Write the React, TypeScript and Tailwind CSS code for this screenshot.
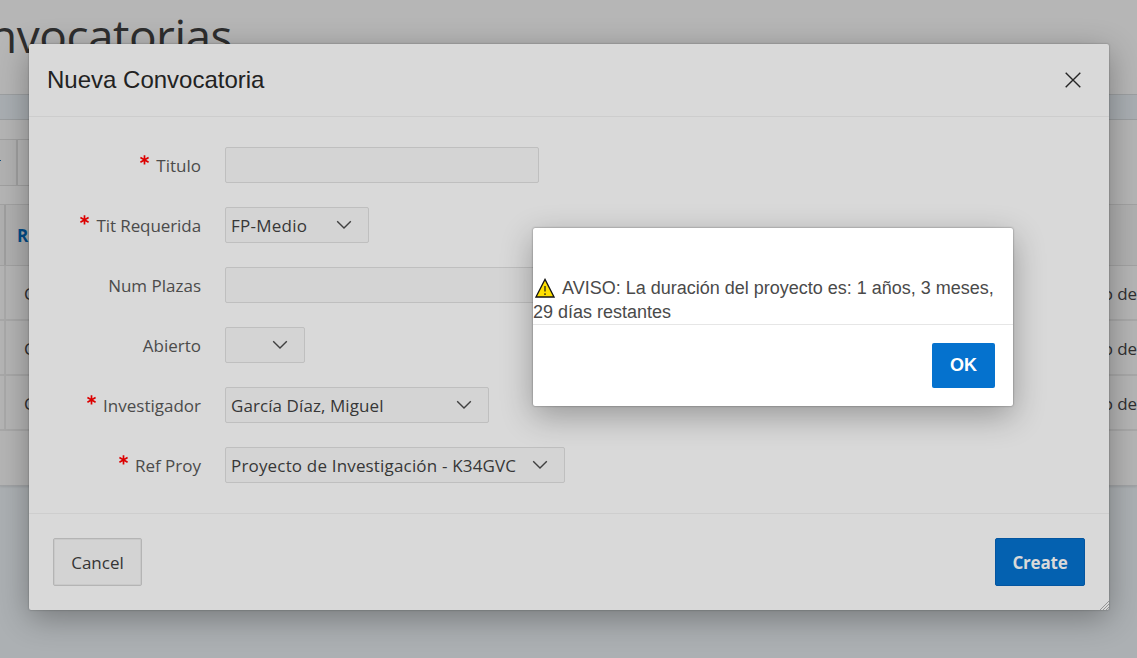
import React from "react";

const ui = "font-['Open_Sans','Noto_Sans',sans-serif]";
const arial = "font-['Liberation_Sans',Arial,sans-serif]";

function Chevron() {
  return (
    <svg className="block h-4 w-4 shrink-0" viewBox="0 0 16 16" fill="none" stroke="#404040" strokeWidth="1.4">
      <path d="M1.2 4.2 8 11l6.8-6.8" />
    </svg>
  );
}

function Asterisk() {
  return (
    <svg className="mr-[7px] mb-[10px] h-[10px] w-[9px] shrink-0" viewBox="0 0 9 10" fill="none" stroke="#dc0000" strokeWidth="1.7">
      <path d="M4.5 .3v9.2M.4 2.5l8.2 4.7M8.6 2.5.4 7.2" />
    </svg>
  );
}

type FieldProps = {
  label: string;
  required?: boolean;
  labelClass?: string;
  boxClass: string;
  children?: React.ReactNode;
};

function Field({ label, required, labelClass = "", boxClass, children }: FieldProps) {
  return (
    <div className="flex h-[60px] items-center">
      <div className="flex w-[172px] shrink-0 items-center justify-end">
        {required && <Asterisk />}
        <span className={`whitespace-nowrap pt-[2px] text-[17px] leading-6 text-[#4b4b4b] ${labelClass}`}>{label}</span>
      </div>
      <div
        className={`ml-6 flex h-9 shrink-0 items-center justify-between rounded-[2px] border border-[#bfbfbf] bg-[#d4d4d4] pl-[5px] text-[17px] text-[#373737] ${boxClass}`}
      >
        {children}
      </div>
    </div>
  );
}

function TableRow() {
  return (
    <div className="flex h-[55px] border-b-2 border-[#a8a8a8] text-[17px] text-[#303030]">
      <div className="w-[6px] shrink-0 border-r-2 border-[#a9a9a9]" />
      <div className="flex flex-1 items-center justify-between pl-[18px] pt-[2px]">
        <span>C</span>
        <span className="tracking-[-0.1px]">o de</span>
      </div>
    </div>
  );
}

function Backdrop() {
  return (
    <div className="flex h-full flex-col bg-[#acb0b3]">
      <div className="flex h-[95px] shrink-0 border-b border-[#9c9fa1] bg-[#b6b6b6]">
        <div className="flex w-[232px] justify-end whitespace-nowrap pt-1 text-[46px] leading-[62px] tracking-[-0.5px] text-[#2e2e2e]">
          Convocatorias
        </div>
      </div>
      <div className="h-[25px] shrink-0 border-b border-[#9b9ea0] bg-[#a9aeb2]" />
      <div className="flex h-[366px] shrink-0 flex-col border-b border-[#a0a2a4] bg-[#b5b5b5] pt-[19px] shadow-[0_1px_2px_rgba(0,0,0,0.1)]">
        <div className="flex h-[47px] w-[600px] shrink-0 border-y border-[#a0a0a0]">
          <div className="flex w-[18px] items-center border-r-2 border-[#9f9f9f] bg-[#b2b2b2]">
            <span className="mb-1 h-px w-px bg-[#14517f]" />
          </div>
        </div>
        <div className="mt-[18px] flex h-[62px] shrink-0 border-y border-[#a2a2a2] bg-[#b0b0b0]">
          <div className="w-[6px] border-r-2 border-[#9f9f9f]" />
          <div className="flex items-center pl-[11px] pt-[2px] text-[17px] font-bold text-[#024c88]">R</div>
        </div>
        <TableRow />
        <TableRow />
        <TableRow />
      </div>
    </div>
  );
}

function NewCallDialog() {
  return (
    <div className="absolute left-[29px] top-[44px] flex h-[566px] w-[1080px] flex-col rounded-[2px] bg-[#d9d9d9] shadow-[0_8px_32px_rgba(0,0,0,0.32),0_0_2px_rgba(0,0,0,0.35)]">
      <div className="flex h-[73px] shrink-0 items-center justify-between border-b border-[#cdcdcd] pl-[18px] pr-7">
        <h2 className={`${arial} text-[24px] leading-8 text-[#222]`}>Nueva Convocatoria</h2>
        <svg className="mb-px h-4 w-4" viewBox="0 0 16 16" fill="none" stroke="#262626" strokeWidth="1.4">
          <path d="m.7.7 14.6 14.6M15.3.7.7 15.3" />
        </svg>
      </div>
      <div className="flex flex-1 flex-col pt-[18px]">
        <Field label="Titulo" required boxClass="w-[314px]" />
        <Field label="Tit Requerida" required labelClass="tracking-[-0.08px]" boxClass="w-[144px] pr-4">
          <span className="pt-[2px] tracking-[0.25px]">FP-Medio</span>
          <Chevron />
        </Field>
        <Field label="Num Plazas" boxClass="w-[314px]" />
        <Field label="Abierto" boxClass="w-[80px] pr-4">
          <span />
          <Chevron />
        </Field>
        <Field label="Investigador" required boxClass="w-[264px] pr-4">
          <span className="pt-[2px] tracking-[0.08px]">García Díaz, Miguel</span>
          <Chevron />
        </Field>
        <Field label="Ref Proy" required boxClass="w-[340px] pr-4">
          <span className="whitespace-nowrap pt-[2px] tracking-[0.17px]">Proyecto de Investigación - K34GVC</span>
          <Chevron />
        </Field>
      </div>
      <div className="flex h-[97px] shrink-0 items-center justify-between border-t border-[#cecece] px-6">
        <button className="h-12 w-[89px] rounded-[2px] border border-[#b4b4b4] bg-[#d3d3d3] pt-[2px] text-[17px] text-[#353535] shadow-[inset_0_0_0_1px_#c9c9c9]">
          Cancel
        </button>
        <button className="h-12 w-[90px] rounded-[2px] border border-[#0455a0] bg-[#0461b0] pt-[2px] text-[17px] font-bold tracking-[-0.2px] text-[#d9d9d9]">
          Create
        </button>
      </div>
      <svg className="absolute bottom-0 right-0 h-[9px] w-[9px]" viewBox="0 0 9 9" stroke="#8d8d8d" strokeWidth=".9">
        <path d="M0 9 9 0M3 9l6-6M6 9l3-3" />
      </svg>
    </div>
  );
}

function AlertDialog() {
  return (
    <div className="absolute left-[533px] top-[228px] flex h-[178px] w-[480px] flex-col rounded-[2px] bg-white shadow-[0_10px_32px_rgba(0,0,0,0.3),0_0_2px_rgba(0,0,0,0.5)]">
      <div className={`${arial} h-[97px] shrink-0 border-b border-[#e6e6e6] pt-12 text-[18px] leading-6 text-[#4a4a4a]`}>
        <div className="flex whitespace-nowrap">
          <svg className="ml-[2px] mr-[7px] mt-[2px] h-[20px] w-[20px]" viewBox="0 0 20 20">
            <path d="M10 1.4 19 19H1Z" fill="#ffe000" stroke="#151515" strokeWidth="1.3" />
            <path d="M10 8v5.6M10 15.2v1.7" stroke="#151515" strokeWidth="1.2" />
          </svg>
          <span className="tracking-[-0.005px]">AVISO: La duración del proyecto es: 1 años, 3 meses,</span>
        </div>
        <div>29 días restantes</div>
      </div>
      <div className="flex flex-1 items-center justify-end pr-[18px]">
        <button className={`${arial} h-[45px] w-[63px] rounded-[2px] bg-[#0572ce] text-[18px] font-bold text-white`}>OK</button>
      </div>
    </div>
  );
}

export default function App() {
  return (
    <div className={`${ui} relative h-screen w-full overflow-hidden`}>
      <Backdrop />
      <NewCallDialog />
      <AlertDialog />
    </div>
  );
}
